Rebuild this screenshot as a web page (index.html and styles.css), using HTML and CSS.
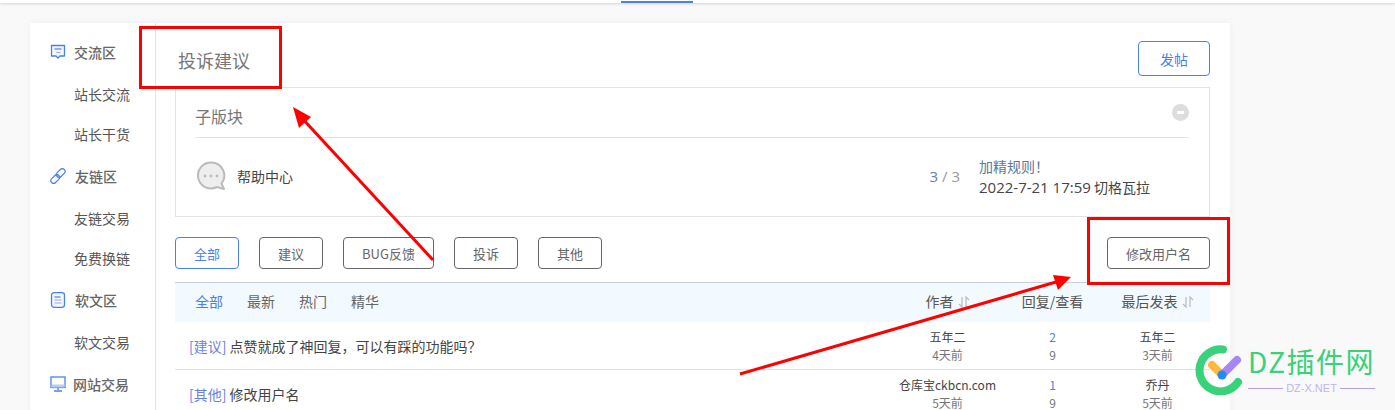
FILE: index.html
```html
<!DOCTYPE html>
<html>
<head>
    <title>投诉建议</title>
    <link rel="stylesheet" href="styles.css">
</head>
<body>

<!-- Top Bar -->
<div class="topbar"><span class="topbar-active"></span></div>

<div class="card">
    <!-- Side Menu -->
    <div class="side">
        <div class="side-group">
            <svg class="side-icon" viewBox="0 0 16 16"><path d="M1.500 1.500h13v10.500h-4.500l-2 2-2-2h-4.500z" fill="#f4f7fe" stroke="#4a80ee" stroke-width="1.300" stroke-linejoin="round"/><path d="M4.500 5h7" stroke="#4a80ee" stroke-width="1.200"/><path d="M6.500 8.500h4" stroke="#8fb0f4" stroke-width="1.200"/></svg>
            <span>交流区</span>
        </div>
        <div class="side-item">站长交流</div>
        <div class="side-item">站长干货</div>
        <div class="side-group side-group-wide">
            <svg class="side-icon" viewBox="0 0 16 16"><g fill="none" stroke="#4a80ee" stroke-width="1.200"><rect x="8" y="0" width="5.500" height="10" rx="2.750" transform="rotate(45 10.750 5)"/><rect x="2.500" y="6" width="5.500" height="10" rx="2.750" transform="rotate(45 5.250 11)"/></g></svg>
            <span>友链区</span>
        </div>
        <div class="side-item">友链交易</div>
        <div class="side-item">免费换链</div>
        <div class="side-group side-group-wide">
            <svg class="side-icon" viewBox="0 0 16 16"><rect x="1.500" y=".7" width="13" height="14.600" rx="2.500" fill="#f4f7fe" stroke="#4a80ee" stroke-width="1.300"/><path d="M4.500 5h6" stroke="#4a80ee" stroke-width="1.200"/><path d="M4.500 8h7M4.500 11h7" stroke="#8fb0f4" stroke-width="1.200"/></svg>
            <span>软文区</span>
        </div>
        <div class="side-item">软文交易</div>
        <div class="side-group side-group-narrow">
            <svg class="side-icon" viewBox="0 0 16 16"><rect x="1" y="1" width="14" height="10.500" fill="#fff" stroke="#4a80ee" stroke-width="1.300"/><rect x="1.500" y="8.500" width="13" height="3" fill="#b5cbf8"/><path d="M8 12v2" stroke="#4a80ee" stroke-width="1.300"/><path d="M4 15h8" stroke="#4a80ee" stroke-width="1.500"/></svg>
            <span>网站交易</span>
        </div>
    </div>

    <!-- Main Section -->
    <div class="main">
        <div class="main-head">
            <h1 class="title">投诉建议</h1>
            <button class="btn btn-post">发帖</button>
        </div>

        <div class="sub-box">
            <div class="sub-head">
                <span>子版块</span>
                <span class="collapse"></span>
            </div>
            <div class="sub-row">
                <svg class="sub-icon" viewBox="0 0 30 30"><path d="M15 1.500a13 13 0 1 0 6 24.500l7 2-2.500-5.500A13 13 0 0 0 15 1.500z" fill="#eee" stroke="#bbb" stroke-width="2" stroke-linejoin="round"/><circle cx="9" cy="15" r="1.400" fill="#bbb"/><circle cx="15" cy="15" r="1.400" fill="#bbb"/><circle cx="21" cy="15" r="1.400" fill="#bbb"/></svg>
                <span class="sub-name">帮助中心</span>
                <span class="sub-count"><b>3</b> / 3</span>
                <div class="sub-last">
                    <div class="sub-last-title">加精规则！</div>
                    <div><span class="sub-date">2022-7-21 17:59</span> 切格瓦拉</div>
                </div>
            </div>
        </div>

        <div class="filters">
            <button class="btn btn-on">全部</button>
            <button class="btn">建议</button>
            <button class="btn btn-wide">BUG反馈</button>
            <button class="btn">投诉</button>
            <button class="btn">其他</button>
            <button class="btn btn-rename">修改用户名</button>
        </div>

        <div class="thead">
            <div class="tabs">
                <span class="tab-on">全部</span>
                <span>最新</span>
                <span>热门</span>
                <span>精华</span>
            </div>
            <div class="col">作者 <svg class="sort" viewBox="0 0 12 12"><path d="M4 1v10L1 8M8 11V1l3 3" fill="none" stroke="#bbb" stroke-width="1.200"/></svg></div>
            <div class="col">回复/查看</div>
            <div class="col">最后发表 <svg class="sort" viewBox="0 0 12 12"><path d="M4 1v10L1 8M8 11V1l3 3" fill="none" stroke="#bbb" stroke-width="1.200"/></svg></div>
        </div>

        <div class="row">
            <div class="row-title"><a>[建议]</a> 点赞就成了神回复，可以有踩的功能吗？</div>
            <div class="col"><div>五年二</div><div class="muted">4天前</div></div>
            <div class="col"><div class="blue">2</div><div class="muted">9</div></div>
            <div class="col"><div>五年二</div><div class="muted">3天前</div></div>
        </div>
        <div class="row">
            <div class="row-title"><a>[其他]</a> 修改用户名</div>
            <div class="col"><div>仓库宝ckbcn.com</div><div class="muted">5天前</div></div>
            <div class="col"><div class="blue">1</div><div class="muted">9</div></div>
            <div class="col"><div>乔丹</div><div class="muted">5天前</div></div>
        </div>
    </div>
</div>

<!-- Red Notes Drawn Over The Page -->
<div class="note note-title"></div>
<div class="note note-rename"></div>
<svg class="arrows" viewBox="0 0 1395 410">
    <path d="M433 260L300 116" stroke="#f00" stroke-width="3" fill="none"/>
    <path d="M293 107l18 10-12 11z" fill="#f00"/>
    <path d="M740 374L1056 282" stroke="#f00" stroke-width="3" fill="none"/>
    <path d="M1071 277l-18-2 5 15z" fill="#f00"/>
</svg>

<!-- Watermark -->
<div class="mark">
    <svg class="mark-logo" viewBox="0 0 50 50">
        <path d="M28 4.500A21 21 0 1 0 43 37" fill="none" stroke="#37d279" stroke-width="8" stroke-linecap="round"/>
        <path d="M17 20l10 10" stroke="#fdb93f" stroke-width="8" stroke-linecap="round"/>
        <path d="M27 30l15-15" stroke="#a985f8" stroke-width="8" stroke-linecap="round"/>
        <circle cx="27" cy="30" r="4.500" fill="#1f8cf5"/>
    </svg>
    <div class="mark-text">
        <div class="mark-name">DZ插件网</div>
        <div class="mark-sub"><span>DZ-X.NET</span></div>
    </div>
</div>

</body>
</html>
```

FILE: styles.css
```css
html, body {
    height: 410px;
    overflow: hidden;
}
body {
    margin: 0;
    background-color: #f9f9f9;
    font-family: "Noto Sans CJK SC", "Liberation Sans", sans-serif;
    font-size: 14px;
    color: #333;
}
.topbar {
    height: 3px;
    background-color: #fff;
    box-shadow: 0 1px 3px rgba(0,0,0,0.15);
    padding-left: 621px;
}
.topbar-active {
    display: block;
    width: 72px;
    height: 2px;
    background-color: #4a80ee;
    position: relative;
    top: 1px;
}
.card {
    display: flex;
    width: 1200px;
    height: 400px;
    margin: 20px 0 0 30px;
    background-color: #fff;
    box-shadow: 0 0 8px rgba(0,0,0,0.05);
}

/* Side Menu */
.side {
    width: 125px;
    flex-shrink: 0;
    padding-top: 7px;
    border-right: 1px solid #e3e3e3;
}
.side-group, .side-item {
    height: 44px;
    display: flex;
    align-items: center;
    white-space: nowrap;
}
.side-item {
    height: 40px;
    padding-left: 44px;
    color: #555;
}
.side-group {
    padding-left: 20px;
    font-weight: 500;
    color: #666;
}
.side-icon {
    width: 16px;
    height: 16px;
    margin-right: 8px;
}
.side-group-wide .side-icon {
    margin-right: 9px;
}
.side-group-narrow .side-icon {
    margin-right: 7px;
}

/* Main Section */
.main {
    width: 1035px;
    margin-left: 19px;
}
.main-head {
    height: 64px;
    display: flex;
    justify-content: space-between;
    padding-top: 18px;
    box-sizing: border-box;
}
.title {
    margin: 4px 0 0 3px;
    font-size: 18px;
    font-weight: 400;
    line-height: 30px;
    color: #777;
}
.btn {
    width: 64px;
    height: 32px;
    padding: 0;
    background-color: #fff;
    border: 1px solid #666;
    border-radius: 4px;
    font-family: inherit;
    font-size: 13px;
    color: #666;
}
.btn-post {
    width: 72px;
    height: 35px;
    font-size: 14px;
    border-color: #4a80ee;
    color: #4a80ee;
}
.btn-on {
    border-color: #4a80ee;
    color: #4a80ee;
}
.btn-wide {
    width: 91px;
}
.btn-rename {
    width: 103px;
    margin-left: auto;
}

/* Sub Forum Box */
.sub-box {
    height: 130px;
    box-sizing: border-box;
    border: 1px solid #e3e3e3;
    padding: 0 20px 0 19px;
}
.sub-head {
    height: 50px;
    box-sizing: border-box;
    padding-top: 7px;
    display: flex;
    align-items: center;
    justify-content: space-between;
    border-bottom: 1px solid #e3e3e3;
    font-size: 16px;
    color: #777;
}
.collapse {
    width: 17px;
    height: 17px;
    margin-top: -7px;
    border-radius: 50%;
    background-color: #ddd;
    display: flex;
    align-items: center;
    justify-content: center;
}
.collapse::after {
    content: "";
    width: 7px;
    height: 3px;
    background-color: #fff;
}
.sub-row {
    height: 75px;
    display: flex;
    align-items: center;
}
.sub-icon {
    width: 30px;
    height: 30px;
    margin: 0 11px 0 1px;
}
.sub-name {
    width: 56px;
    white-space: nowrap;
    color: #444;
}
.sub-count {
    margin-left: auto;
    margin-right: 19px;
    font-family: "Open Sans", sans-serif;
    font-size: 15px;
    color: #999;
}
.sub-count b {
    font-weight: 400;
    color: #5a7fb0;
}
.sub-last {
    width: 210px;
    margin-top: 2px;
    line-height: 21px;
    color: #444;
}
.sub-last-title {
    color: #5d7899;
}
.sub-date {
    font-family: "Open Sans", sans-serif;
    font-size: 15px;
}

/* Filter Buttons */
.filters {
    display: flex;
    gap: 20px;
    margin-top: 20px;
}

/* Thread List */
.thead {
    display: flex;
    align-items: center;
    height: 40px;
    margin-top: 13px;
    padding-bottom: 3px;
    box-sizing: border-box;
    border-top: 1px solid #c8d0d6;
    background-color: #f3faff;
    color: #666;
}
.tabs {
    flex: 1;
    display: flex;
    gap: 24px;
    padding-left: 20px;
}
.tab-on {
    color: #4a80ee;
}
.col {
    width: 105px;
    text-align: center;
    white-space: nowrap;
}
.thead .col {
    color: #555;
}
.sort {
    width: 12px;
    height: 12px;
    margin-left: 1px;
    vertical-align: -1px;
}
.row {
    display: flex;
    align-items: center;
    height: 48px;
    box-sizing: border-box;
    border-bottom: 1px solid #e3e3e3;
}
.row-title {
    flex: 1;
    padding-left: 14px;
    color: #444;
}
.row-title a {
    color: #6a7fe0;
}
.row .col {
    font-size: 12px;
    line-height: 18px;
    color: #444;
}
.row .col .muted {
    color: #777;
}
.row .col .blue {
    color: #4a80ee;
}

/* Red Notes */
.note {
    position: absolute;
    box-sizing: border-box;
    border: 3px solid #f00;
}
.note-title {
    left: 139px;
    top: 26px;
    width: 143px;
    height: 63px;
}
.note-rename {
    left: 1087px;
    top: 217px;
    width: 143px;
    height: 68px;
}
.arrows {
    position: absolute;
    left: 0;
    top: 0;
    width: 1395px;
    height: 410px;
}

/* Watermark */
.mark {
    position: absolute;
    left: 1195px;
    top: 345px;
    display: flex;
    gap: 3px;
}
.mark-logo {
    width: 50px;
    height: 50px;
}
.mark-text {
    width: 127px;
}
.mark-name {
    font-size: 28px;
    line-height: 32px;
    letter-spacing: 1.500px;
    color: #37d279;
    white-space: nowrap;
}
.mark-sub {
    display: flex;
    align-items: center;
    justify-content: center;
    font-family: "Liberation Sans", sans-serif;
    font-size: 11px;
    line-height: 12px;
    margin-top: 5px;
    color: #c3b2f3;
}
.mark-sub span {
    padding: 0 3px;
}
.mark-sub::before, .mark-sub::after {
    content: "";
    flex: 1;
    height: 1px;
    background-color: #b79df5;
}
```
